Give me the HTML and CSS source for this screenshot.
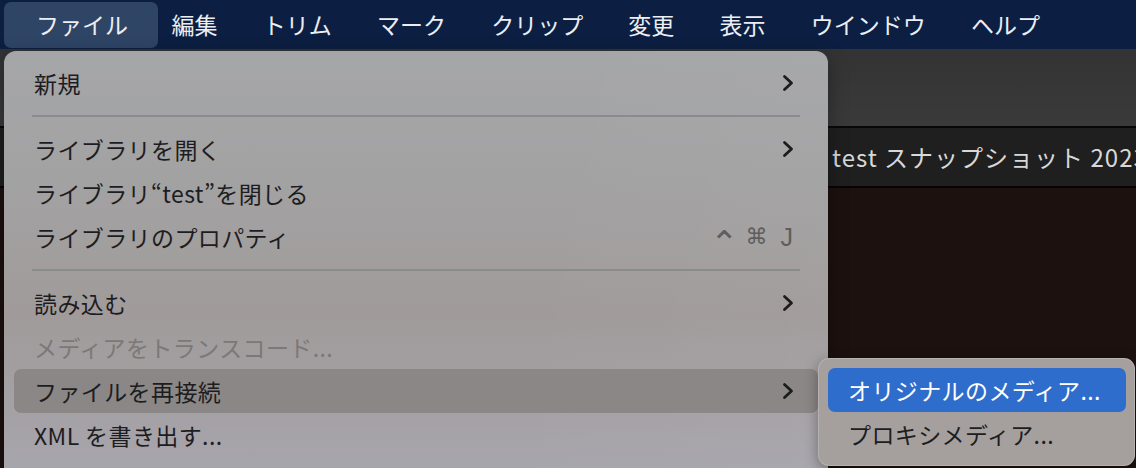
FILE: index.html
```html
<!DOCTYPE html>
<html lang="ja">
<head>
<meta charset="utf-8">
<title>ファイル メニュー</title>
<link rel="stylesheet" href="styles.css">
</head>
<body>
<div class="screen">
  <header class="menubar">
    <div class="mb-item active">ファイル</div>
    <div class="mb-item">編集</div>
    <div class="mb-item">トリム</div>
    <div class="mb-item">マーク</div>
    <div class="mb-item">クリップ</div>
    <div class="mb-item">変更</div>
    <div class="mb-item">表示</div>
    <div class="mb-item">ウインドウ</div>
    <div class="mb-item">ヘルプ</div>
  </header>

  <main class="workspace">
    <div class="toolbar"></div>
    <div class="titlebar"><span class="title-text">test スナップショット 2023</span></div>
    <div class="viewer"></div>
  </main>

  <nav class="menu">
    <div class="row"><span>新規</span><svg class="chev" viewBox="0 0 12 18" width="12" height="18"><path d="M2.5 2.5 L9.5 9 L2.5 15.5"/></svg></div>
    <div class="sep"></div>
    <div class="row"><span>ライブラリを開く</span><svg class="chev" viewBox="0 0 12 18" width="12" height="18"><path d="M2.5 2.5 L9.5 9 L2.5 15.5"/></svg></div>
    <div class="row"><span>ライブラリ“test”を閉じる</span></div>
    <div class="row"><span>ライブラリのプロパティ</span><span class="shortcut"><span class="key ctrl">⌃</span><span class="key">⌘</span><span class="key j">J</span></span></div>
    <div class="sep"></div>
    <div class="row"><span>読み込む</span><svg class="chev" viewBox="0 0 12 18" width="12" height="18"><path d="M2.5 2.5 L9.5 9 L2.5 15.5"/></svg></div>
    <div class="row disabled"><span>メディアをトランスコード...</span></div>
    <div class="row hover"><span>ファイルを再接続</span><svg class="chev" viewBox="0 0 12 18" width="12" height="18"><path d="M2.5 2.5 L9.5 9 L2.5 15.5"/></svg></div>
    <div class="row"><span>XML を書き出す...</span></div>
  </nav>

  <nav class="submenu">
    <div class="sub-row selected">オリジナルのメディア...</div>
    <div class="sub-row">プロキシメディア...</div>
  </nav>
</div>
</body>
</html>
```

FILE: styles.css
```css
* { box-sizing: border-box; }

html, body {
  margin: 0;
  padding: 0;
  background: #1b110f;
}

.screen {
  position: relative;
  width: 1136px;
  height: 468px;
  overflow: hidden;
  font-family: "Noto Sans CJK JP", "Noto Sans", sans-serif;
  font-size: 23px;
}

/* ---------- menu bar ---------- */
.menubar {
  display: flex;
  align-items: center;
  height: 49px;
  padding-left: 4px;
  background: #0c1f42;
  color: #eceef2;
}

.mb-item {
  display: flex;
  align-items: center;
  height: 46px;
  padding: 0 22.6px;
  line-height: 1;
  white-space: nowrap;
}

.mb-item.active {
  padding: 0 30px 0 32px;
  margin-right: -9px;
  background: #2f4566;
  border-radius: 7px;
}

/* ---------- app behind ---------- */
.workspace {
  display: flex;
  flex-direction: column;
  height: 419px;
}

.toolbar {
  height: 79px;
  background: linear-gradient(#333333, #3a3a3a);
  border-bottom: 2px solid #080808;
}

.titlebar {
  display: flex;
  align-items: center;
  height: 60px;
  padding-left: 832px;
  background: #1f1f1f;
  border-bottom: 2px solid #050505;
  white-space: nowrap;
  overflow: hidden;
}

.title-text {
  color: #d8d8d8;
  font-size: 24px;
  letter-spacing: 1px;
  line-height: 1;
}

.viewer {
  flex: 1;
  background: #1c110f;
}

/* ---------- dropdown menu ---------- */
.menu {
  position: absolute;
  left: 4px;
  top: 51px;
  width: 824px;
  height: 440px;
  padding: 10px;
  border-radius: 12px;
  background:
    linear-gradient(100deg, rgba(255,255,255,0) 60%, rgba(255,255,255,0.03) 100%),
    linear-gradient(180deg, #a5a6a8 0%, #a3a2a3 30%, #a09b9a 60%, #a8a6af 100%);
  color: #1d1d1f;
  letter-spacing: 0.4px;
  box-shadow: 0 6px 20px rgba(0,0,0,0.35);
}

.row {
  display: flex;
  align-items: center;
  justify-content: space-between;
  height: 44px;
  padding: 0 25px 0 20px;
  border-radius: 7px;
  line-height: 1;
  white-space: nowrap;
}

.row.disabled { color: #7c7877; }

.row.hover { background: #8b8786; }

.sep {
  height: 22px;
  display: flex;
  align-items: center;
  padding: 0 18px;
}

.sep::before {
  content: "";
  flex: 1;
  height: 2px;
  background: #8b8a8c;
}

.chev {
  display: block;
  margin-right: -1px;
}

.chev path {
  fill: none;
  stroke: #1c1c1c;
  stroke-width: 2.8;
  stroke-linecap: round;
  stroke-linejoin: round;
}

.shortcut {
  display: flex;
  align-items: center;
  gap: 7px;
  color: #5f5d5d;
  font-family: "DejaVu Sans", "Noto Sans", sans-serif;
  font-size: 22px;
  letter-spacing: 0;
}

.shortcut .ctrl {
  font-size: 34px;
  line-height: 22px;
  margin-top: 12px;
}

.shortcut .j {
  margin-left: 6px;
  font-family: "Liberation Sans", sans-serif;
  font-size: 25px;
}

/* ---------- submenu ---------- */
.submenu {
  position: absolute;
  left: 818px;
  top: 358px;
  width: 317px;
  height: 108px;
  padding: 10px 9px 10px 10px;
  border-radius: 11px;
  background: #a5a09e;
  color: #1d1d1f;
  letter-spacing: 0.4px;
  box-shadow: 0 4px 14px rgba(0,0,0,0.35), inset 0 0 0 1px rgba(255,255,255,0.18);
}

.sub-row {
  display: flex;
  align-items: center;
  height: 44px;
  padding-left: 20px;
  border-radius: 7px;
  line-height: 1;
  white-space: nowrap;
}

.sub-row.selected {
  background: #2e6dcc;
  color: #ffffff;
}
```
